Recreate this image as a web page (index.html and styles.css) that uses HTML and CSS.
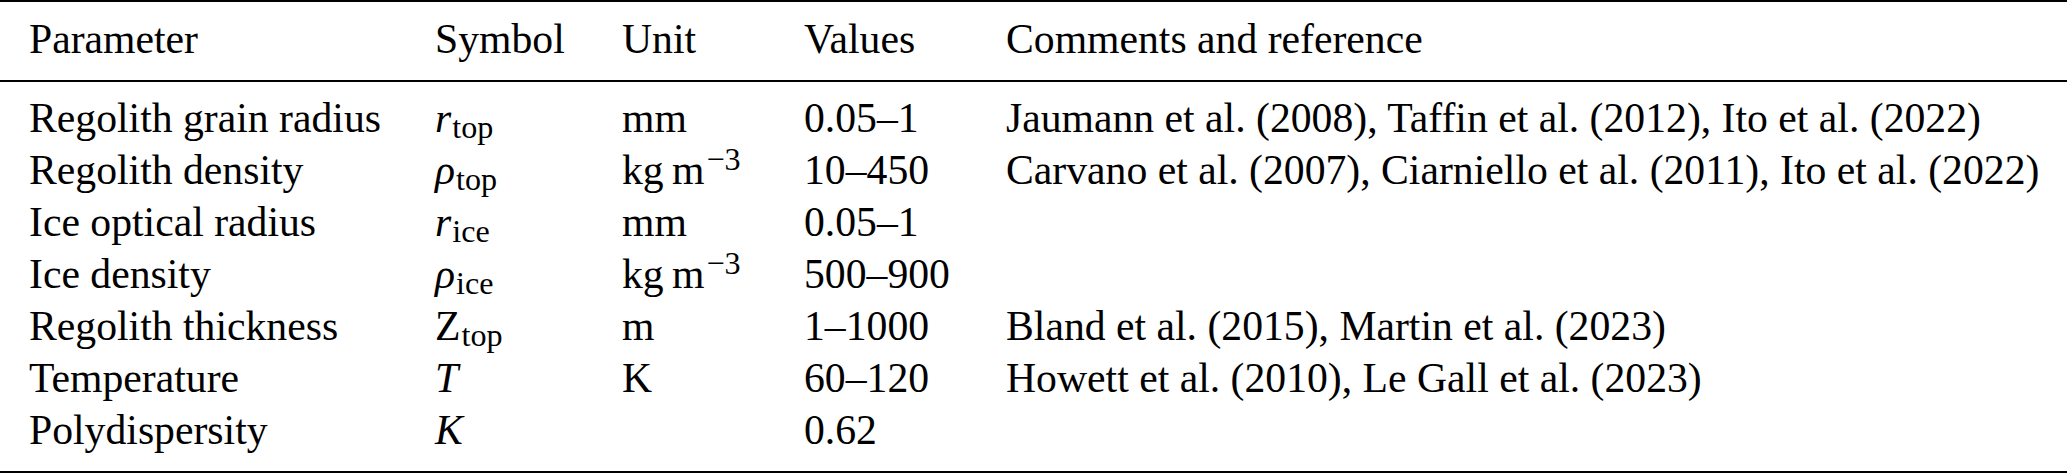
FILE: index.html
```html
<!DOCTYPE html>
<html lang="en">
<head>
    <meta charset="UTF-8">
    <meta name="viewport" content="width=device-width, initial-scale=1.0">
    <title>Model parameters</title>
    <link rel="stylesheet" href="styles.css">
</head>
<body>
    <table class="tabla">
        <colgroup>
            <col class="col-param">
            <col class="col-sym">
            <col class="col-unit">
            <col class="col-val">
            <col>
        </colgroup>
        <thead>
            <tr>
                <th>Parameter</th>
                <th>Symbol</th>
                <th>Unit</th>
                <th>Values</th>
                <th>Comments and reference</th>
            </tr>
        </thead>
        <tbody>
            <tr>
                <td>Regolith grain radius</td>
                <td><i>r</i><sub>top</sub></td>
                <td>mm</td>
                <td>0.05–1</td>
                <td>Jaumann et al. (2008), Taffin et al. (2012), Ito et al. (2022)</td>
            </tr>
            <tr>
                <td>Regolith density</td>
                <td><i>ρ</i><sub>top</sub></td>
                <td>kg&thinsp;m<sup>−3</sup></td>
                <td>10–450</td>
                <td>Carvano et al. (2007), Ciarniello et al. (2011), Ito et al. (2022)</td>
            </tr>
            <tr>
                <td>Ice optical radius</td>
                <td><i>r</i><sub>ice</sub></td>
                <td>mm</td>
                <td>0.05–1</td>
                <td></td>
            </tr>
            <tr>
                <td>Ice density</td>
                <td><i>ρ</i><sub>ice</sub></td>
                <td>kg&thinsp;m<sup>−3</sup></td>
                <td>500–900</td>
                <td></td>
            </tr>
            <tr>
                <td>Regolith thickness</td>
                <td>Z<sub>top</sub></td>
                <td>m</td>
                <td>1–1000</td>
                <td>Bland et al. (2015), Martin et al. (2023)</td>
            </tr>
            <tr>
                <td>Temperature</td>
                <td><i>T</i></td>
                <td>K</td>
                <td>60–120</td>
                <td>Howett et al. (2010), Le Gall et al. (2023)</td>
            </tr>
            <tr>
                <td>Polydispersity</td>
                <td><i>K</i></td>
                <td></td>
                <td>0.62</td>
                <td></td>
            </tr>
        </tbody>
    </table>
</body>
</html>
```

FILE: styles.css
```css
* {
    margin: 0;
    padding: 0;
    box-sizing: border-box;
}

body {
    background-color: #fff;
    color: #000;
    font-family: "Liberation Serif", "Times New Roman", serif;
    font-size: 41.7px;
}

.tabla {
    width: 100%;
    table-layout: fixed;
    border-collapse: separate;
    border-spacing: 0;
    border-top: 2px solid #000;
    border-bottom: 2px solid #000;
}

.col-param { width: 435px; }
.col-sym { width: 187px; }
.col-unit { width: 182px; }
.col-val { width: 202px; }

.tabla th,
.tabla td {
    text-align: left;
    font-weight: normal;
    line-height: 52px;
    white-space: nowrap;
    vertical-align: baseline;
}

.tabla th {
    padding-top: 11px;
    padding-bottom: 15px;
    border-bottom: 2px solid #000;
}

.tabla th:first-child,
.tabla td:first-child {
    padding-left: 29px;
}

.tabla tbody tr:first-child td {
    padding-top: 10px;
}

.tabla tbody tr:last-child td {
    padding-bottom: 15px;
}

/* subindices y exponentes sin mover la linea */
.tabla sub,
.tabla sup {
    font-size: 0.77em;
    line-height: 0;
}

.tabla sub {
    vertical-align: -6px;
    margin-left: 1px;
}

.tabla sup {
    vertical-align: 14px;
    margin-left: 2px;
}
```
